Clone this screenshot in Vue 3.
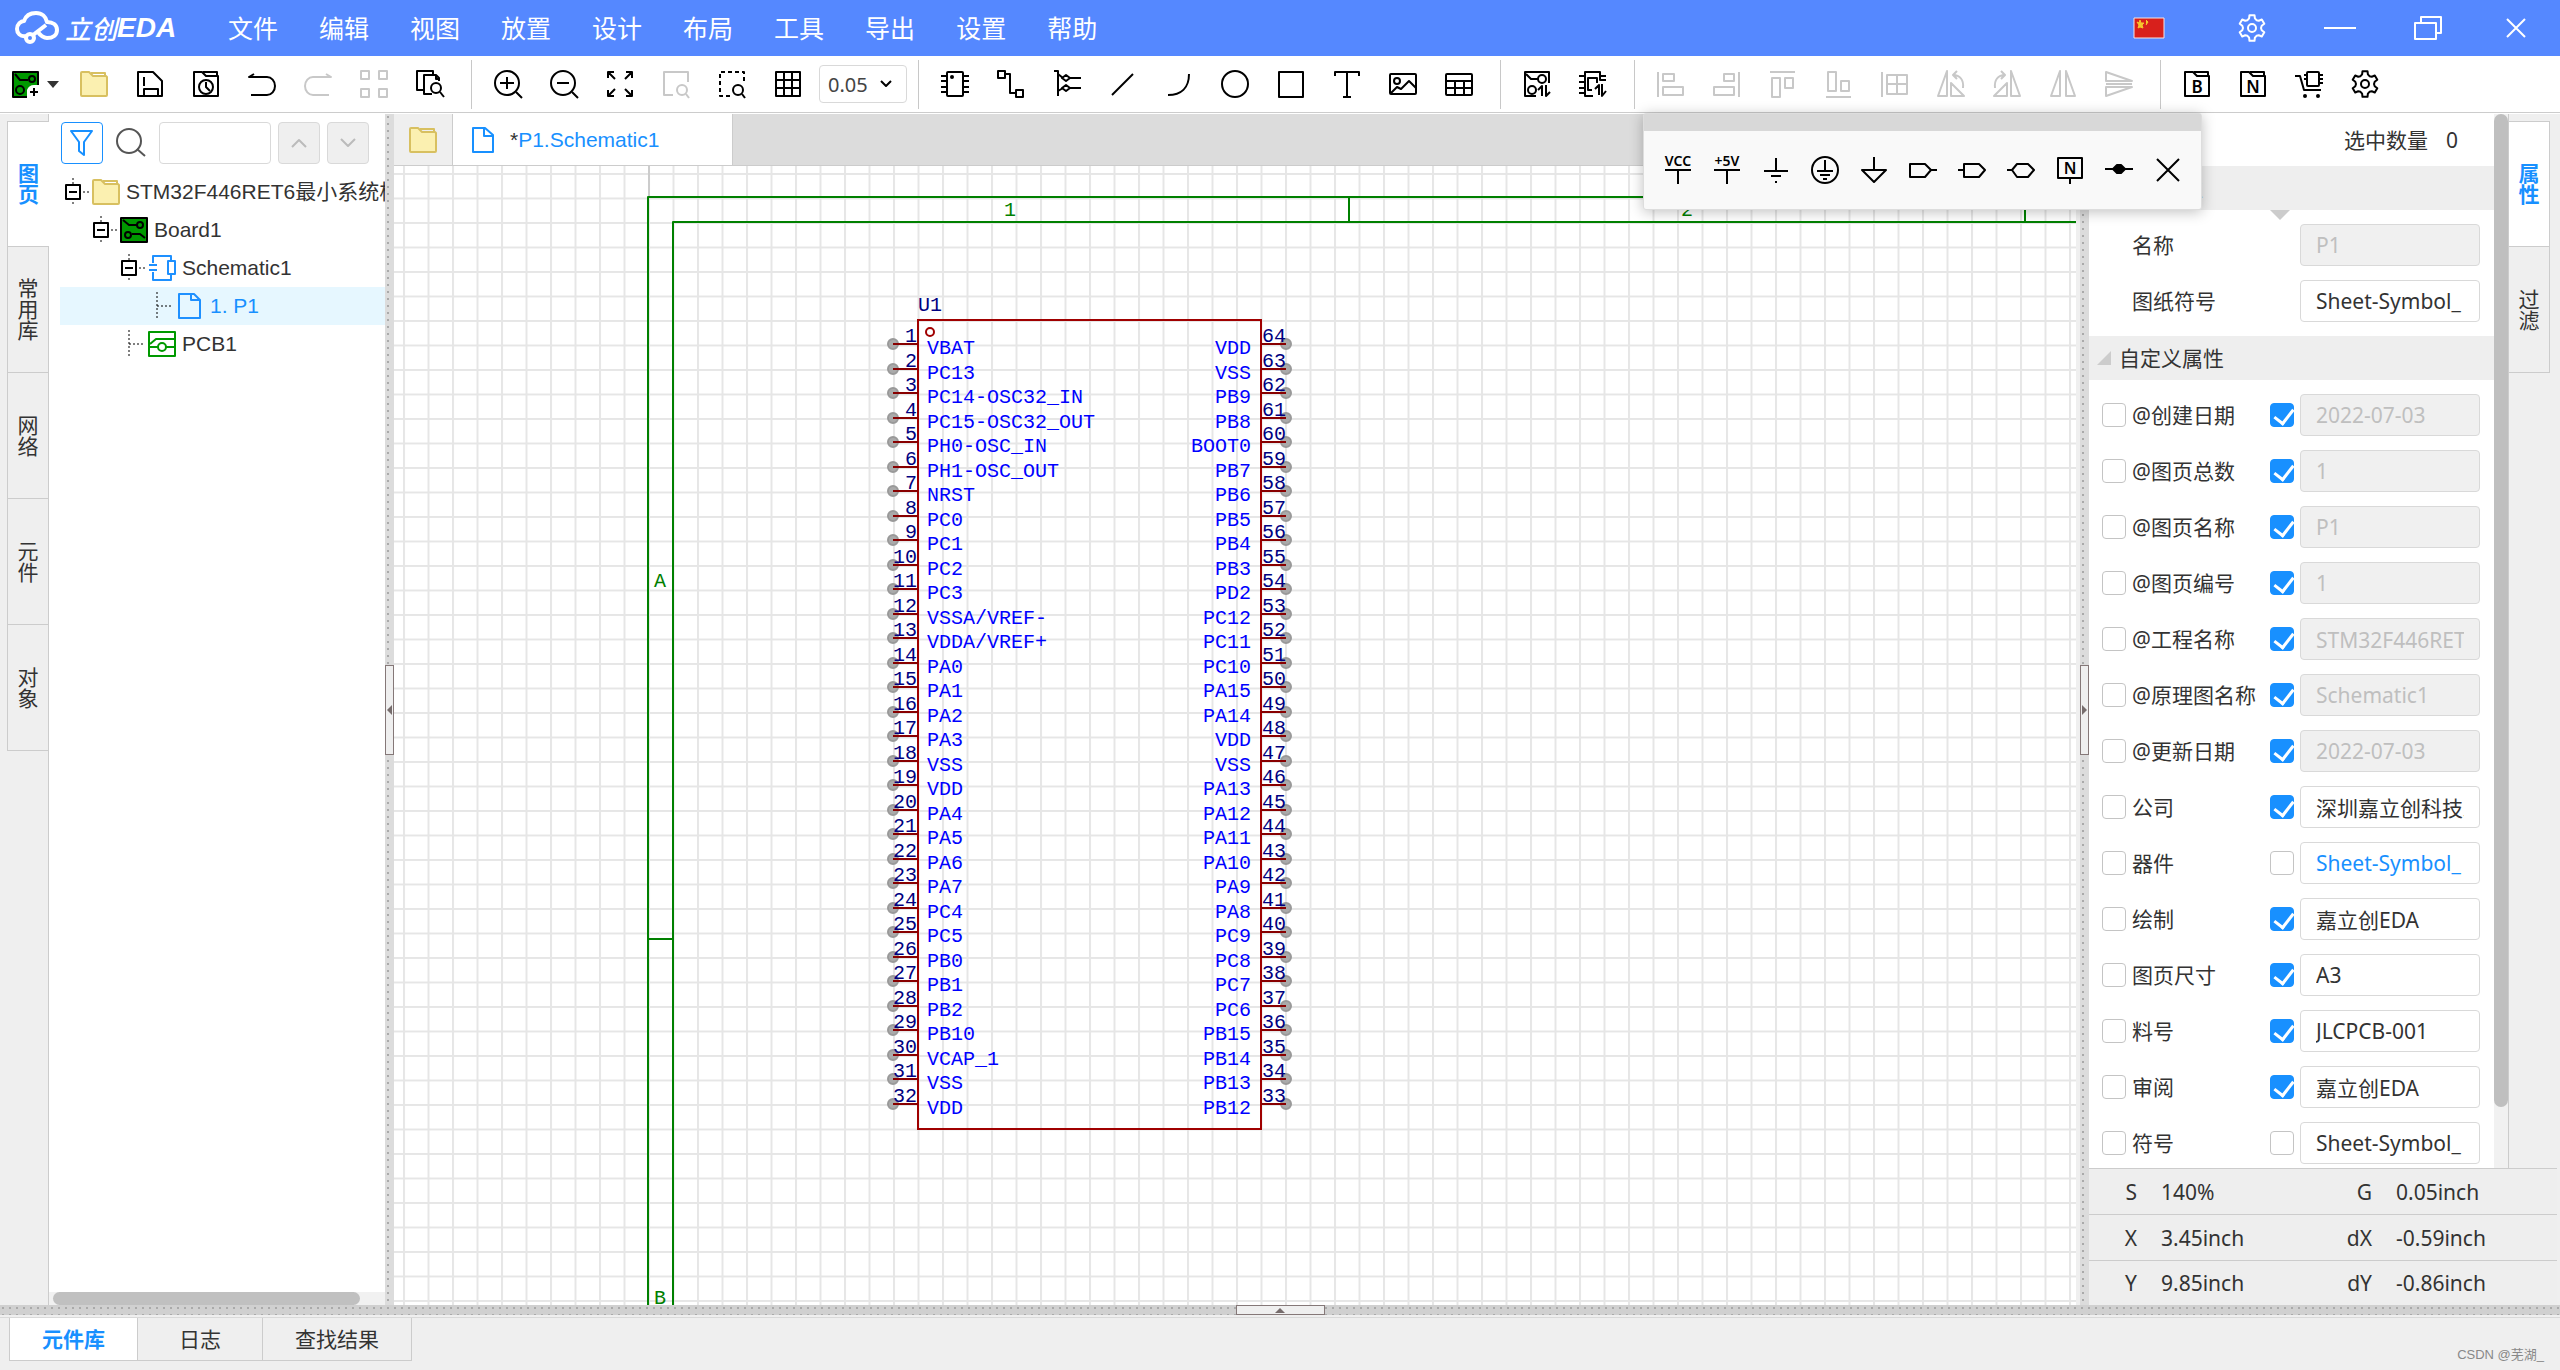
<script setup>
import { ref, reactive } from 'vue'

const menus = ['文件', '编辑', '视图', '放置', '设计', '布局', '工具', '导出', '设置', '帮助']

function gearPath() {
  const shape = [[-30, 9], [-17, 10], [-11, 13], [11, 13], [17, 10]]
  const points = []
  for (let k = 0; k < 6; k++) {
    for (const [deg, r] of shape) {
      const a = ((k * 60 - 90 + deg) * Math.PI) / 180
      points.push(`${(14 + r * Math.cos(a)).toFixed(1)} ${(14 + r * Math.sin(a)).toFixed(1)}`)
    }
  }
  return `<path d="M${points.join('L')}Z"/><circle cx="14" cy="14" r="4"/>`
}

const folderShape = '<path fill="#fbf0b0" stroke="#d8c060" d="M1 25V3q0-1 1-1h7l4 4h13q1 1 1 1v18q0 1-1 1H2q-1 0-1-1z"/><path fill="none" stroke="#d8c060" d="M11 3h14v4"/>'
const darkFolder = '<path d="M2 26V2h8l4 4h12v20z"/><path d="M11 2h14v4"/>'
const boardLines = '<path d="M3 4l6 5h8M25 22l-5-4h-8"/><circle cx="20" cy="9" r="3"/><circle cx="8" cy="19" r="3"/>'

const icons = {
  boardAdd: '<rect x="1" y="2" width="25" height="25" fill="#009900"/><path d="M3 4l5 6h8"/><circle cx="20" cy="9" r="3"/><circle cx="8" cy="20" r="4"/><path fill="#fff" stroke="none" d="M15 29V20q2-5 7-5h6v14z"/><path d="M22 18v8M18 22h8"/>',
  folder: folderShape,
  save: '<path d="M2 26V2h15l9 9v15z"/><path d="M8 7v9M8 26v-7h14v7"/>',
  history: darkFolder + '<circle cx="14" cy="17" r="7"/><path d="M14 12v5l4 4"/>',
  undo: '<path d="M6 4L1 7h18a8 9 0 0 1 0 18H3"/>',
  redo: '<path d="M22 4l5 3H9a8 9 0 0 0 0 18h16"/>',
  squares: '<rect x="1" y="1" width="8" height="8"/><rect x="19" y="1" width="8" height="8"/><rect x="1" y="19" width="8" height="8"/><rect x="19" y="19" width="8" height="8"/>',
  findDoc: '<path d="M8 20H1V1h16v4"/><path d="M16 24H8V5h12l3 3v3M20 5v4h4"/><circle cx="20" cy="18" r="5"/><path d="M24 22l4 5"/>',
  zoomIn: '<circle cx="13" cy="13" r="12"/><path d="M22 22l6 6M13 7v12M6 13h14"/>',
  zoomOut: '<circle cx="13" cy="13" r="12"/><path d="M22 22l6 6M7 13h12"/>',
  expand: '<path d="M2 8V2h6M2 2l7 7M20 2h6v6M26 2l-7 7M2 20v6h6M2 26l7-7M26 20v6h-6M26 26l-7-7"/>',
  pageFind: '<path d="M11 25H2V2h24v10"/><circle cx="20" cy="20" r="5"/><path d="M24 24l3 4"/>',
  areaFind: '<path stroke-dasharray="4 3" d="M12 26H2V2h24v12"/><circle cx="20" cy="20" r="5"/><path d="M24 24l3 4"/>',
  grid: '<rect x="2" y="2" width="24" height="24"/><path d="M10 2v24M18 2v24M2 10h24M2 18h24"/>',
  chip: '<rect x="6" y="2" width="16" height="24" rx="1"/><path d="M0 6h6M0 11h6M0 17h6M0 22h6M22 6h6M22 11h6M22 17h6M22 22h6"/><circle cx="11" cy="7" r="1"/>',
  wire: '<rect x="1" y="1" width="7" height="7"/><path d="M8 4h5v19h6"/><rect x="19" y="20" width="7" height="7"/>',
  bus: '<path d="M1 1h4v25M5 4l5 4M5 21l5-3M16 8h12M16 18h12"/><path d="M9 8l4-3 4 3-4 3zM9 18l4-3 4 3-4 3z"/>',
  line: '<path d="M3 25L24 4"/>',
  arc: '<path d="M3 25C16 25 24 18 24 4"/>',
  circle: '<circle cx="14" cy="14" r="13"/>',
  rect: '<rect x="2" y="2" width="24" height="25"/>',
  text: '<path d="M2 6V2h24v4M14 2v25M10 27h8"/>',
  image: '<rect x="1" y="4" width="26" height="20" rx="1"/><circle cx="8" cy="11" r="3"/><path d="M2 23l6-6 4 2 8-8 7 7"/>',
  table: '<rect x="1" y="4" width="26" height="21" rx="1"/><path d="M1 11h26M1 18h26M10 11v14M19 11v14"/>',
  boardSync: '<path d="M26 13V2H2v24h11"/><path d="M3 4l5 5h7"/><circle cx="19" cy="9" r="4"/><circle cx="9" cy="20" r="4"/><path d="M15 20l4-4v10M23 15v11l4-4"/>',
  chipSync: '<path d="M14 26H6V2h15v8h6M0 6h6M0 12h6M0 18h6M0 23h6M21 6h6"/><path d="M13 20H9V8h9v5M16 19l4-4v10M23 14v12l4-5"/>',
  alignLeft: '<path d="M1 2v25"/><rect x="6" y="4" width="11" height="7"/><rect x="6" y="17" width="20" height="8"/>',
  alignRight: '<path d="M26 2v25"/><rect x="11" y="4" width="10" height="7"/><rect x="1" y="17" width="20" height="8"/>',
  alignTop: '<path d="M1 2h25"/><rect x="3" y="8" width="8" height="19"/><rect x="16" y="8" width="8" height="10"/>',
  alignBottom: '<path d="M1 27h25"/><rect x="3" y="2" width="8" height="19"/><rect x="16" y="11" width="8" height="10"/>',
  distribute: '<path d="M1 2v25"/><rect x="6" y="5" width="20" height="19"/><path d="M16 5v19M6 14h20"/>',
  rotateLeft: '<path d="M1 26L10 1v25zM14 13l13 13H14zM26 18C27 10 23 5 16 5M20 1l-4 4 4 4"/>',
  rotateRight: '<path d="M27 26L18 1v25zM14 13L1 26h13zM2 18C1 10 5 5 12 5M8 1l4 4-4 4"/>',
  flipH: '<path d="M2 26l9-25v25zM26 26L17 1v25z"/>',
  flipV: '<path d="M1 2l26 9H1zM1 26l26-9H1zM1 14h26"/>',
  bom: darkFolder + '<text x="14" y="23">B</text>',
  netlist: darkFolder + '<text x="14" y="23">N</text>',
  cart: '<path d="M0 6h5l4 14h17"/><rect x="12" y="2" width="12" height="14" rx="1"/><path d="M9 5h3M9 9h3M24 5h4M24 9h4M24 13h4"/><circle cx="10" cy="26" r="1"/><circle cx="23" cy="26" r="1"/>',
  gear: gearPath()
}

const toolGroups = [
  [['save', '保存'], ['history', '历史'], ['undo', '撤销'], ['redo', '重做', 1], ['squares', '组合', 1], ['findDoc', '查找']],
  [['zoomIn', '放大'], ['zoomOut', '缩小'], ['expand', '适应全部'], ['pageFind', '适应选中', 1], ['areaFind', '适应区域'], ['grid', '网格']],
  [['chip', '器件'], ['wire', '导线'], ['bus', '总线'], ['line', '折线'], ['arc', '圆弧'], ['circle', '圆形'], ['rect', '矩形'], ['text', '文本'], ['image', '图片'], ['table', '表格']],
  [['boardSync', '更新到PCB'], ['chipSync', '更新器件']],
  [['alignLeft', '左对齐', 1], ['alignRight', '右对齐', 1], ['alignTop', '顶对齐', 1], ['alignBottom', '底对齐', 1], ['distribute', '等间距', 1], ['rotateLeft', '左旋转', 1], ['rotateRight', '右旋转', 1], ['flipH', '水平翻转', 1], ['flipV', '垂直翻转', 1]],
  [['bom', '物料清单'], ['netlist', '网表'], ['cart', '下单'], ['gear', '设置']]
]

const palette = [
  ['VCC', '<text x="14" y="10">VCC</text><path d="M1 14h26M14 14v14"/>'],
  ['+5V', '<text x="14" y="10">+5V</text><path d="M1 14h26M14 14v14"/>'],
  ['地', '<path d="M14 2v13M2 15h24M9 20h10M13 26h2"/>'],
  ['保护地', '<circle cx="14" cy="14" r="13"/><path d="M14 4v11M6 15h16M9 19h10M12 23h4"/>'],
  ['模拟地', '<path d="M14 1v13M2 14h24L14 26z"/>'],
  ['输入端口', '<path d="M1 8h15l6 6-6 7H1zM22 14h6"/>'],
  ['输出端口', '<path d="M6 8h15l6 6-6 7H6zM0 14h6"/>'],
  ['双向端口', '<path d="M10 8h11l6 6-6 7H10l-5-7zM0 14h5"/>'],
  ['网络标签', '<rect x="2" y="2" width="24" height="20"/><path d="M14 22v6"/><text class="mid" x="14" y="18">N</text>'],
  ['节点', '<path d="M0 13h28"/><path fill="currentColor" d="M8 13l4-4h4l4 4-4 4h-4z"/>'],
  ['关闭', '<path d="M3 3l22 22M25 3L3 25"/>']
]

const leftTabs = ['图页', '常用库', '网络', '元件', '对象']
const bottomTabs = ['元件库', '日志', '查找结果']
const gridSize = ref('0.05')
const treeFilter = ref('')

const boardIcon = '<rect x="1" y="2" width="26" height="24" fill="#009900" stroke="#000"/><g stroke="#000">' + boardLines + '</g>'
const tree = [
  { text: 'STM32F446RET6最小系统板', depth: 0, open: true, icon: folderShape },
  { text: 'Board1', depth: 1, open: true, icon: boardIcon },
  { text: 'Schematic1', depth: 2, open: true, icon: '<g stroke="#1e90ff"><path d="M5 9V2h18v5M5 18v8h18v-6M1 11h8M1 16h8"/><rect x="20" y="7" width="7" height="13"/></g>' },
  { text: '1. P1', depth: 3, active: true, icon: '<g stroke="#1e90ff"><path d="M3 26V2h15l6 6v18zM15 2v6h9"/></g>' },
  { text: 'PCB1', depth: 2, icon: '<g stroke="#009900"><rect x="1" y="2" width="26" height="24"/><path d="M2 14l6-5h19M1 17h9M18 17h9"/><circle cx="14" cy="17" r="4"/></g>' }
]

const GRID = 49 / 2
const leftPins = ['VBAT', 'PC13', 'PC14-OSC32_IN', 'PC15-OSC32_OUT', 'PH0-OSC_IN', 'PH1-OSC_OUT', 'NRST', 'PC0', 'PC1', 'PC2', 'PC3', 'VSSA/VREF-', 'VDDA/VREF+', 'PA0', 'PA1', 'PA2', 'PA3', 'VSS', 'VDD', 'PA4', 'PA5', 'PA6', 'PA7', 'PC4', 'PC5', 'PB0', 'PB1', 'PB2', 'PB10', 'VCAP_1', 'VSS', 'VDD']
const rightPins = ['VDD', 'VSS', 'PB9', 'PB8', 'BOOT0', 'PB7', 'PB6', 'PB5', 'PB4', 'PB3', 'PD2', 'PC12', 'PC11', 'PC10', 'PA15', 'PA14', 'VDD', 'VSS', 'PA13', 'PA12', 'PA11', 'PA10', 'PA9', 'PA8', 'PC9', 'PC8', 'PC7', 'PC6', 'PB15', 'PB14', 'PB13', 'PB12']
const pinY = (i) => 178 + Math.round(i * GRID)

const baseProps = reactive([
  { label: '名称', value: 'P1', locked: true },
  { label: '图纸符号', value: 'Sheet-Symbol_' }
])
const customProps = reactive([
  { label: '@创建日期', value: '2022-07-03', locked: true, shown: true },
  { label: '@图页总数', value: '1', locked: true, shown: true },
  { label: '@图页名称', value: 'P1', locked: true, shown: true },
  { label: '@图页编号', value: '1', locked: true, shown: true },
  { label: '@工程名称', value: 'STM32F446RET6最小系统板', locked: true, shown: true },
  { label: '@原理图名称', value: 'Schematic1', locked: true, shown: true },
  { label: '@更新日期', value: '2022-07-03', locked: true, shown: true },
  { label: '公司', value: '深圳嘉立创科技发展有限公司', shown: true },
  { label: '器件', value: 'Sheet-Symbol_', link: true, shown: false },
  { label: '绘制', value: '嘉立创EDA', shown: true },
  { label: '图页尺寸', value: 'A3', shown: true },
  { label: '料号', value: 'JLCPCB-001', shown: true },
  { label: '审阅', value: '嘉立创EDA', shown: true },
  { label: '符号', value: 'Sheet-Symbol_', shown: false }
].map((p) => ({ ...p, named: false })))

const status = [
  ['S', '140%', 'G', '0.05inch'],
  ['X', '3.45inch', 'dX', '-0.59inch'],
  ['Y', '9.85inch', 'dY', '-0.86inch']
]
</script>

<template>
  <div class="app">
    <header class="titlebar">
      <div class="logo">
        <svg width="44" height="34" viewBox="0 0 44 34" aria-hidden="true">
          <path d="M11 25C5 26 2 22 2 18c0-5 4-8 7-8C11 4 16 2 21 2c6 0 10 4 11 9 6 0 10 3 10 8 0 5-4 8-10 8-4 0-7-3-10-7" />
          <circle cx="15" cy="27" r="4" />
          <path d="M18 24l13-10" />
        </svg>
        <span class="logo-cn">立创</span><span class="logo-en">EDA</span>
      </div>
      <nav class="menus">
        <a v-for="m in menus" :key="m" href="#">{{ m }}</a>
      </nav>
      <div class="window-actions">
        <button class="lang" aria-label="语言">
          <svg width="32" height="22" viewBox="0 0 32 22"><rect x="1" y="1" width="30" height="20" fill="#d8201c" stroke="#f4e6e6" stroke-width="1" /><path d="M4 5l2 1 1-3 1 3 3 0-2 2 1 3-3-1-2 1 1-3zM13 3l2 2-2 3" fill="#f5c52c" stroke="#f5c52c" stroke-width="1" /></svg>
        </button>
        <button aria-label="设置"><svg width="28" height="28" viewBox="0 0 28 28" v-html="icons.gear"></svg></button>
        <button aria-label="最小化"><svg width="34" height="28" viewBox="0 0 34 28"><path d="M1 14h32" /></svg></button>
        <button aria-label="还原"><svg width="28" height="28" viewBox="0 0 28 28"><path d="M1 9h21v16H1zM7 9V3h20v16h-5" /></svg></button>
        <button aria-label="关闭"><svg width="28" height="28" viewBox="0 0 28 28"><path d="M5 5l18 18M23 5L5 23" /></svg></button>
      </div>
    </header>

    <div class="toolbar">
      <button class="new-btn" aria-label="新建">
        <svg class="icon" viewBox="0 0 28 28" v-html="icons.boardAdd"></svg><i class="caret"></i>
      </button>
      <button class="tool" aria-label="打开"><svg class="icon" viewBox="0 0 28 28" v-html="icons.folder"></svg></button>
      <template v-for="(group, g) in toolGroups" :key="g">
        <span v-if="g" class="divider"></span>
        <button v-for="t in group" :key="t[0]" class="tool" :disabled="!!t[2]" :aria-label="t[1]">
          <svg class="icon" viewBox="0 0 28 28" v-html="icons[t[0]]"></svg>
        </button>
        <label v-if="g === 1" class="grid-select">
          <select v-model="gridSize" aria-label="网格尺寸"><option>0.05</option><option>0.1</option></select>
          <svg width="12" height="8" viewBox="0 0 12 8"><path d="M1 1l5 5 5-5" /></svg>
        </label>
      </template>
    </div>

    <main class="workspace">
      <div class="side-tabs left">
        <button v-for="(t, i) in leftTabs" :key="t" :class="{ active: i === 0 }">{{ t }}</button>
      </div>

      <aside class="explorer">
        <div class="search-row">
          <button class="filter" aria-label="筛选"><svg width="24" height="28" viewBox="0 0 24 28"><path d="M1 2h21l-8 11v13l-5-4v-9z" /></svg></button>
          <svg class="lens" width="30" height="30" viewBox="0 0 30 30"><circle cx="13" cy="13" r="12" /><path d="M21 21l8 7" /></svg>
          <input v-model="treeFilter" type="text" aria-label="搜索">
          <button class="step" aria-label="上一个"><svg width="16" height="10" viewBox="0 0 16 10"><path d="M1 9l7-7 7 7" /></svg></button>
          <button class="step" aria-label="下一个"><svg width="16" height="10" viewBox="0 0 16 10"><path d="M1 1l7 7 7-7" /></svg></button>
        </div>
        <ul class="tree">
          <li v-for="n in tree" :key="n.text" :class="{ active: n.active }" :style="{ paddingLeft: 4 + n.depth * 28 + 'px' }">
            <svg class="twig" width="28" height="38" viewBox="0 0 28 38">
              <template v-if="n.open">
                <rect x="2" y="12" width="14" height="14" /><path d="M5 19h8" />
                <path class="dots" d="M9 5v6M9 29v4M19 19h7" />
              </template>
              <path v-else class="dots" d="M9 5v27M9 19h16" />
            </svg>
            <svg class="icon" viewBox="0 0 28 28" v-html="n.icon"></svg>
            <span>{{ n.text }}</span>
          </li>
        </ul>
        <div class="hscroll"><i></i></div>
      </aside>

      <div class="splitter"><button aria-label="收起左侧"><i class="to-left"></i></button></div>

      <section class="editor">
        <div class="doc-tabs">
          <button class="home" aria-label="工程"><svg class="icon" viewBox="0 0 28 28" v-html="icons.folder"></svg></button>
          <button class="doc">
            <svg width="22" height="26" viewBox="0 0 22 26"><path d="M1 25V1h12l8 7v17zM12 1v8h9" /></svg>
            <span><b>*</b>P1.Schematic1</span>
          </button>
        </div>
        <svg class="canvas" width="100%" height="100%">
          <defs>
            <pattern id="grid" x="9" y="7" :width="GRID" :height="GRID" patternUnits="userSpaceOnUse">
              <path d="M1 0V25M0 1H25" stroke="#e6e6e6" stroke-width="2" />
            </pattern>
          </defs>
          <rect width="100%" height="100%" fill="url(#grid)" />
          <path class="axis" d="M255 0v31" />
          <g class="sheet">
            <path d="M254 2000V31H2400M279 2000V56H2400M955 31v25M1631 31v25M254 773h25" />
            <text x="616" y="50">1</text><text x="1293" y="50">2</text>
            <text x="266" y="421">A</text><text x="266" y="1138">B</text>
          </g>
          <text class="number" x="524" y="145">U1</text>
          <rect class="body" x="524" y="154" width="343" height="809" />
          <circle class="body" cx="536" cy="166" r="4" />
          <g v-for="(name, i) in leftPins" :key="'l' + i">
            <circle class="pin-end" cx="499" :cy="pinY(i)" r="5" />
            <path class="pin" :d="`M499 ${pinY(i)}h25`" />
            <text class="number end" x="523" :y="pinY(i) - 2">{{ i + 1 }}</text>
            <text class="name" x="533" :y="pinY(i) + 10">{{ name }}</text>
          </g>
          <g v-for="(name, i) in rightPins" :key="'r' + i">
            <circle class="pin-end" cx="892" :cy="pinY(i)" r="5" />
            <path class="pin" :d="`M867 ${pinY(i)}h25`" />
            <text class="number" x="868" :y="pinY(i) - 2">{{ 64 - i }}</text>
            <text class="name end" x="857" :y="pinY(i) + 10">{{ name }}</text>
          </g>
        </svg>
      </section>

      <div class="splitter right"><button aria-label="收起右侧"><i class="to-right"></i></button></div>

      <div class="right-column">
        <div class="right-top">
          <aside class="props">
            <div class="count"><span>选中数量</span><span>0</span></div>
            <h3 class="section">基本属性<i class="pointer"></i></h3>
            <div class="rows">
              <div v-for="(p, i) in baseProps" :key="p.label" class="row">
                <span class="spacer"></span>
                <label :for="'b' + i">{{ p.label }}</label>
                <input :id="'b' + i" v-model="p.value" type="text" :disabled="p.locked">
              </div>
            </div>
            <h3 class="section"><i class="fold"></i>自定义属性</h3>
            <div class="rows">
              <div v-for="(p, i) in customProps" :key="p.label" class="row">
                <input v-model="p.named" type="checkbox" :aria-label="p.label + '名称可见'">
                <label :for="'c' + i">{{ p.label }}</label>
                <input v-model="p.shown" type="checkbox" :aria-label="p.label + '值可见'">
                <input :id="'c' + i" v-model="p.value" type="text" :class="{ link: p.link }" :disabled="p.locked">
              </div>
            </div>
          </aside>
          <div class="vscroll"><i></i></div>
          <div class="side-tabs right">
            <button class="active">属性</button>
            <button>过滤</button>
          </div>
        </div>
        <dl class="status">
          <div v-for="s in status" :key="s[0]">
            <dt>{{ s[0] }}</dt><dd>{{ s[1] }}</dd><dt>{{ s[2] }}</dt><dd>{{ s[3] }}</dd>
          </div>
        </dl>
      </div>

      <div class="palette">
        <div class="palette-grip"></div>
        <div class="palette-items">
          <button v-for="p in palette" :key="p[0]" :aria-label="p[0]"><svg class="icon" viewBox="0 0 28 28" v-html="p[1]"></svg></button>
        </div>
      </div>
    </main>

    <div class="bottom-splitter"><button aria-label="展开底部"><i class="to-up"></i></button></div>
    <footer class="footer">
      <button v-for="(t, i) in bottomTabs" :key="t" :class="{ active: i === 0 }">{{ t }}</button>
      <span class="credit">CSDN @芜湖_</span>
    </footer>
  </div>
</template>

<style>
body { margin: 0; }
</style>

<style scoped>
.app {
  display: flex;
  flex-direction: column;
  height: 100vh;
  overflow: hidden;
  background: #efefef;
  color: #333;
  font: 21px/26px "Noto Sans", "Noto Sans CJK SC", sans-serif;
}
.app * { box-sizing: border-box; }
button { margin: 0; padding: 0; border: 0; background: none; color: inherit; font: inherit; }
svg { flex: none; fill: none; stroke: currentColor; stroke-width: 2; stroke-linejoin: round; }
.icon { display: block; width: 28px; height: 28px; overflow: visible; }
.icon :deep(text) { fill: currentColor; stroke: none; font: 600 17px "Noto Sans", sans-serif; text-anchor: middle; }

.titlebar { display: flex; flex: none; align-items: center; height: 56px; background: #5588ff; color: #fff; }
.logo { display: flex; align-items: center; width: 228px; padding-left: 15px; line-height: 32px; }
.logo svg { stroke-width: 4; margin-right: 6px; }
.logo-cn { font: italic 500 26px/32px "Noto Sans CJK SC", sans-serif; }
.logo-en { font: italic 700 28px/32px "Liberation Sans", sans-serif; }
.menus { display: flex; gap: 41px; font-size: 25px; }
.menus a { color: inherit; text-decoration: none; }
.window-actions { display: flex; margin-left: auto; }
.window-actions button { display: flex; align-items: center; justify-content: center; width: 88px; }
.window-actions .lang { width: 118px; }

.toolbar { display: flex; flex: none; align-items: center; height: 57px; border-bottom: 1px solid #ccc; background: #fff; color: #000; }
.tool { display: flex; justify-content: center; flex: none; width: 56px; }
.tool:disabled { color: #c8c8c8; }
.new-btn { display: flex; align-items: center; gap: 7px; width: 66px; padding-left: 12px; }
.caret { border: 6px solid transparent; border-top: 7px solid #333; border-bottom: 0; }
.divider { flex: none; width: 1px; height: 49px; margin: 0 8px 0 13px; background: #c8c8c8; }
.grid-select { position: relative; flex: none; margin: 0 -2px 0 3px; }
.grid-select select { display: block; width: 88px; height: 38px; padding: 0 8px; border: 1px solid #d9d9d9; border-radius: 4px; background: #fff; color: #444; font: 20px "Noto Sans", sans-serif; appearance: none; }
.grid-select svg { position: absolute; right: 15px; top: 15px; pointer-events: none; }

.workspace { position: relative; display: flex; flex: 1 1 0; min-height: 0; padding-right: 3px; border-top: 1px solid #fff; }
.side-tabs { display: flex; flex: none; flex-direction: column; padding-top: 7px; background: #efefef; }
.side-tabs button { height: 126px; border: 1px solid #ccc; border-top: 0; writing-mode: vertical-rl; font: 21px/40px "Noto Sans CJK SC", sans-serif; text-align: center; }
.side-tabs .active { background: #fff; color: #1890ff; font-weight: 700; border-top: 1px solid #ccc; }
.side-tabs.left { width: 49px; padding-left: 7px; box-shadow: inset -1px 0 #ccc; }
.side-tabs.left .active { border-right: 0; }
.side-tabs.right { width: 49px; padding-right: 7px; border-left: 1px solid #ccc; }
.side-tabs.right button { border-left: 0; }

.explorer { display: flex; flex: none; flex-direction: column; width: 336px; background: #fff; overflow: hidden; }
.search-row { display: flex; align-items: center; padding: 8px 0 9px 12px; }
.search-row button, .search-row input { height: 42px; border: 1px solid #d9d9d9; border-radius: 4px; }
.search-row .filter { display: grid; place-items: center; width: 42px; border-color: #1890ff; color: #1890ff; }
.lens { margin: 0 13px; color: #555; }
.search-row input { width: 112px; margin: 0; background: #fff; font: 21px "Noto Sans", sans-serif; }
.search-row .step { display: grid; place-items: center; width: 42px; margin-left: 7px; background: #efefef; color: #bbb; }
.tree { flex: 1; margin: 0; padding: 0 0 0 11px; list-style: none; font: 21px/38px "Liberation Sans", "Noto Sans CJK SC", sans-serif; }
.tree li { display: flex; align-items: center; height: 38px; white-space: nowrap; }
.tree .active { background: #e6f7ff; color: #1890ff; }
.tree span { margin-left: 6px; }
.twig { color: #000; }
.twig .dots { stroke-dasharray: 2 2; stroke-width: 1; }
.hscroll { flex: none; height: 13px; padding-left: 4px; background: #f1f1f1; }
.hscroll i { display: block; width: 307px; height: 13px; border-radius: 7px; background: #c0c0c0; }

.splitter { display: flex; flex: none; flex-direction: column; justify-content: center; width: 9px; background: radial-gradient(circle at 3px 3px, #aaa 1px, transparent 1px) 0 0 / 7px 7px #dcdcdc; }
.splitter button, .bottom-splitter button { display: grid; place-items: center; border: 1px solid #857878; background: #efefef; }
.splitter button { height: 90px; }
.to-left, .to-right { border: 5px solid transparent; }
.to-left { border-right-color: #766c6c; border-left: 0; }
.to-right { border-left-color: #766c6c; border-right: 0; }

.editor { display: flex; flex: 1 1 0; flex-direction: column; min-width: 0; border-right: 4px solid #efefef; }
.doc-tabs { display: flex; flex: none; height: 52px; border-bottom: 1px solid #ccc; background: #dcdcdc; font: 21px/26px "Liberation Sans", sans-serif; }
.home { display: grid; place-items: center; width: 59px; border-right: 1px solid #ccc; background: #efefef; }
.doc { display: flex; align-items: center; gap: 16px; width: 280px; padding-left: 19px; border-right: 1px solid #ccc; background: #fff; color: #1890ff; }
.doc b { color: #333; font-weight: 400; }
.canvas { display: block; flex: 1 1 0; min-height: 0; background: #fff; stroke: none; }
.canvas text { stroke: none; font: 20px "Liberation Mono", monospace; }
.canvas .axis { stroke: #ccc; }
.sheet path { stroke: #008000; }
.sheet text { fill: #008000; text-anchor: middle; }
.canvas .body, .canvas .pin { stroke: #a00000; stroke-width: 2; stroke-linejoin: miter; }
.canvas .pin { stroke: #880000; }
.canvas .pin-end { fill: #aaa; stroke: #999; stroke-width: 2; }
.canvas .number { fill: #000080; }
.canvas .name { fill: #0000ff; }
.canvas .end { text-anchor: end; }

.right-column { display: flex; flex: none; flex-direction: column; width: 468px; }
.right-top { display: flex; flex: 1 1 0; min-height: 0; }
.props { width: 405px; background: #fff; overflow: hidden; }
.count { display: flex; justify-content: flex-end; gap: 18px; padding: 13px 36px 13px 0; }
.section { position: relative; display: flex; align-items: center; height: 44px; margin: 0; padding-left: 30px; background: #eee; font-size: 21px; font-weight: 400; }
.pointer { position: absolute; left: 181px; top: 44px; border: 10px solid transparent; border-top-color: #ccc; border-bottom: 0; }
.fold { margin: 0 8px 0 -22px; border: 7px solid transparent; border-right-color: #ccc; border-bottom-color: #ccc; }
.rows { padding: 7px 0; }
.row { display: flex; align-items: center; height: 56px; padding: 0 14px 0 13px; }
.row label { width: 138px; margin-left: 6px; white-space: nowrap; }
.row .spacer { width: 24px; }
.row .spacer ~ label { flex: 1; }
.row input { margin: 0; border: 1px solid #d9d9d9; border-radius: 4px; }
.row input[type="text"] { width: 180px; height: 42px; margin-left: auto; padding: 0 15px; background: #fff; color: #333; font: 21px "Noto Sans", "Noto Sans CJK SC", sans-serif; }
.row input[type="text"]:disabled { background: #f0f0f0; color: #bfbfbf; }
.row input.link[type="text"] { color: #1890ff; }
.row input[type="checkbox"] { flex: none; width: 24px; height: 24px; appearance: none; border-color: #c4c4c4; background: #fff; }
.row input[type="checkbox"]:checked { border-color: #1890ff; background: #1890ff; }
.row input[type="checkbox"]:checked::after { content: ""; display: block; width: 9px; height: 16px; margin: 1px 0 0 7px; border: solid #fff; border-width: 0 3px 3px 0; transform: rotate(38deg); }
.vscroll { width: 14px; padding-bottom: 61px; background: #f1f1f1; }
.vscroll i { display: block; height: 100%; border-radius: 7px; background: #bfbfbf; }

.status { flex: none; margin: 0; background: #eee; }
.status div { display: grid; grid-template-columns: 48px 152px 35px 1fr; gap: 0 24px; align-items: center; height: 46px; border-top: 1px solid #ccc; }
.status div:last-child { height: 45px; }
.status dt { justify-self: end; }
.status dd { margin: 0; }

.palette { position: absolute; right: 358px; top: -1px; border: 1px solid #ddd; border-radius: 3px; background: #f9f9f9; color: #000; box-shadow: 0 2px 14px rgba(0, 0, 0, .25); }
.palette-grip { height: 17px; background: #d8d8d8; }
.palette-items { display: flex; padding: 25px 9px; }
.palette-items button { display: flex; justify-content: center; width: 49px; }
.palette-items :deep(text) { font-size: 14px; }
.palette-items :deep(.mid) { font-size: 16px; }

.bottom-splitter { display: flex; flex: none; justify-content: center; height: 10px; background: radial-gradient(circle at 3px 3px, #aaa 1px, transparent 1px) 0 0 / 7px 7px #d0d0d0; }
.bottom-splitter button { width: 89px; height: 10px; }
.to-up { border: 5px solid transparent; border-bottom-color: #766c6c; border-top: 0; }
.footer { display: flex; flex: none; align-items: flex-start; height: 53px; margin-top: 2px; padding-left: 9px; border-top: 1px solid #d9d9d9; }
.footer button { height: 43px; padding: 0 32px; border: 1px solid #ccc; border-width: 0 1px 1px 0; }
.footer button:nth-of-type(2) { padding: 0 41px; }
.footer .active { border-left-width: 1px; background: #fff; color: #1890ff; font-weight: 700; }
.credit { align-self: flex-end; margin-left: auto; padding: 0 16px 6px 0; color: #888; font: 13px/18px "Liberation Sans", "Noto Sans CJK SC", sans-serif; }
</style>
